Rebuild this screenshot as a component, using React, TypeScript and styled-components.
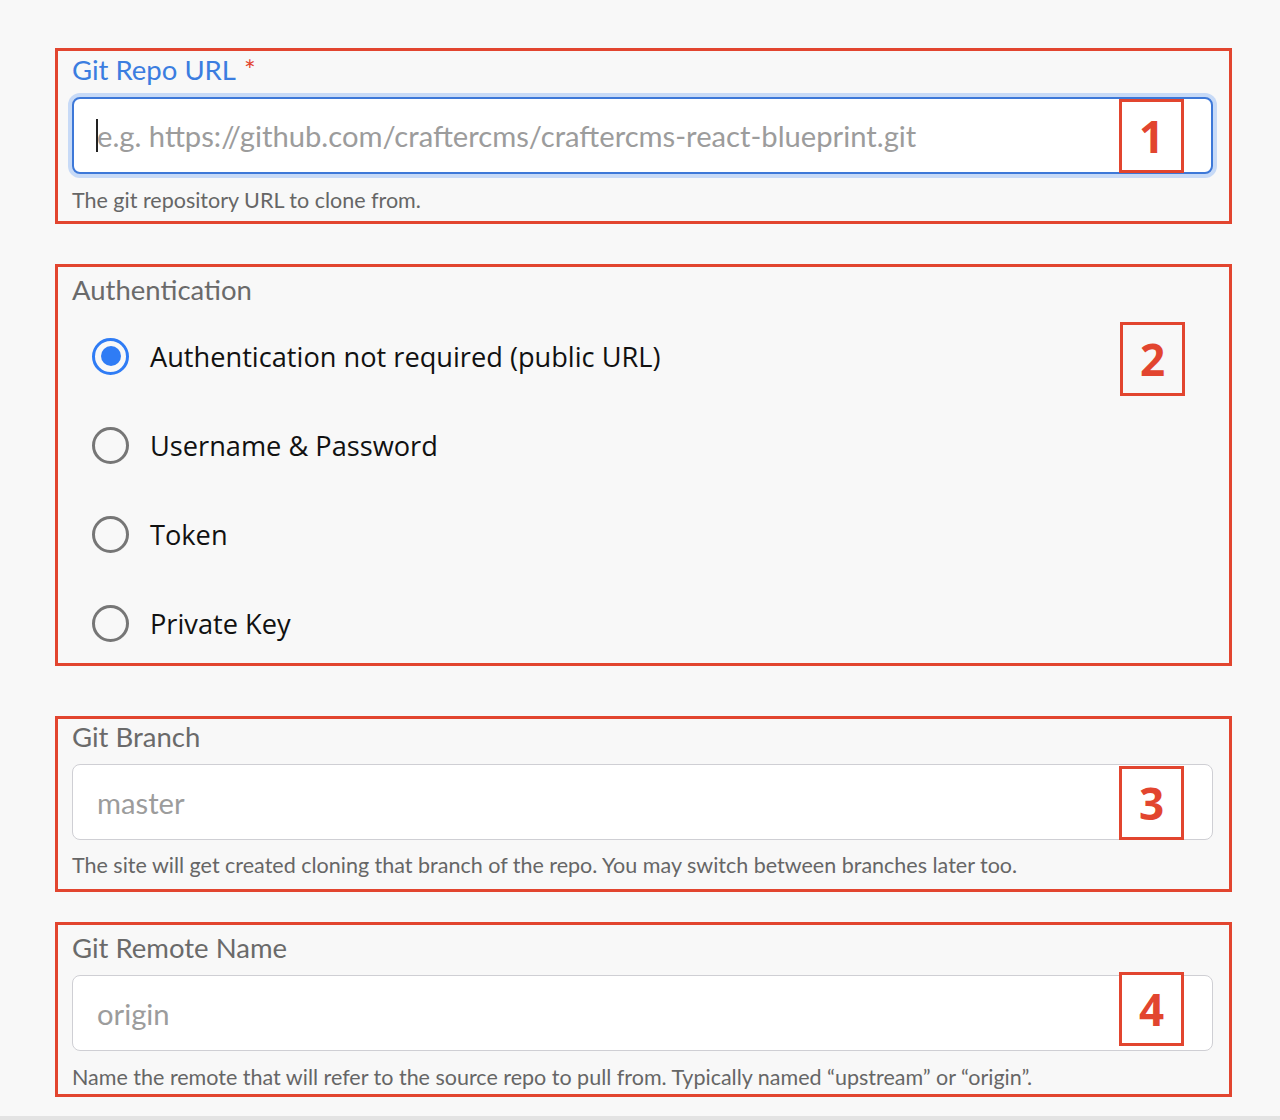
import React from "react";
import styled, { createGlobalStyle } from "styled-components";

const Global = createGlobalStyle`
  html, body { margin: 0; padding: 0; background: #f8f8f8; }
  * { box-sizing: border-box; }
`;

const RED = "#e2452f";

const Page = styled.div`
  width: 1280px;
  height: 1120px;
  display: flex;
  flex-direction: column;
  background: #f8f8f8;
  font-family: Lato, "Open Sans", sans-serif;
`;

const Main = styled.div`
  flex: 1;
  display: flex;
  flex-direction: column;
  padding: 48px 0 0 55px;
`;

const BottomStrip = styled.div`
  height: 4px;
  background: #e3e3e3;
`;

const Section = styled.section<{ $pad: string; $mt: number }>`
  position: relative;
  width: 1177px;
  margin-top: ${(p) => p.$mt}px;
  border: 3px solid ${RED};
  padding: ${(p) => p.$pad};
  display: flex;
  flex-direction: column;
`;

const Label = styled.div<{ $active?: boolean }>`
  font-size: 27.5px;
  line-height: 36px;
  color: ${(p) => (p.$active ? "#3b7de0" : "#6a6a6a")};
`;

const Star = styled.span`
  color: ${RED};
  margin-left: 8px;
`;

const InputWrap = styled.div`
  position: relative;
  margin-top: 9px;
  width: 1141px;
`;

const Input = styled.input<{ $focused?: boolean; $h: number }>`
  display: block;
  width: 100%;
  height: ${(p) => p.$h}px;
  border-radius: 8px;
  background: #fff;
  border: ${(p) => (p.$focused ? "2px solid #3d78d8" : "1px solid #cfcfd4")};
  box-shadow: ${(p) => (p.$focused ? "0 0 0 4px #c7daf7" : "none")};
  padding: 0 ${(p) => (p.$focused ? 23 : 24)}px;
  font-family: Lato, "Open Sans", sans-serif;
  font-size: 29.2px;
  color: #333;
  outline: none;
  &::placeholder {
    color: #9c9c9c;
  }
`;

const Caret = styled.span`
  position: absolute;
  left: 24px;
  top: 22px;
  width: 2px;
  height: 33px;
  background: #222;
`;

const Helper = styled.div<{ $mt: number }>`
  margin-top: ${(p) => p.$mt}px;
  font-size: 21.5px;
  line-height: 24px;
  color: #666;
`;

const Badge = styled.div<{ $top: number; $right: number }>`
  position: absolute;
  top: ${(p) => p.$top}px;
  right: ${(p) => p.$right}px;
  width: 65px;
  height: 74px;
  border: 3px solid ${RED};
  background: #fff;
  display: flex;
  align-items: center;
  justify-content: center;
  font-family: "Open Sans", sans-serif;
  font-weight: 700;
  font-size: 44px;
  color: ${RED};
`;

const ClearBadge = styled(Badge)`
  background: transparent;
`;

const RadioList = styled.div`
  display: flex;
  flex-direction: column;
  gap: 41px;
  margin-top: 24px;
  padding-left: 20px;
`;

const RadioRow = styled.label`
  display: flex;
  align-items: center;
  height: 48px;
  gap: 21px;
  font-family: "Open Sans", sans-serif;
  font-size: 27.2px;
  color: #111;
`;

const Circle = styled.span<{ $checked?: boolean }>`
  width: 37px;
  height: 37px;
  border-radius: 50%;
  border: 3px solid ${(p) => (p.$checked ? "#2f7cf5" : "#767676")};
  display: flex;
  align-items: center;
  justify-content: center;
  flex: none;
  &::after {
    content: "";
    display: ${(p) => (p.$checked ? "block" : "none")};
    width: 20px;
    height: 20px;
    border-radius: 50%;
    background: #2f7cf5;
  }
`;

const options = [
  "Authentication not required (public URL)",
  "Username & Password",
  "Token",
  "Private Key",
];

export default function App() {
  return (
    <Page>
      <Global />
      <Main>
        <Section $pad="1px 14px 9px 14px" $mt={0}>
          <Label $active>
            Git Repo URL<Star>*</Star>
          </Label>
          <InputWrap>
            <Input
              $focused
              $h={77}
              placeholder="e.g. https://github.com/craftercms/craftercms-react-blueprint.git"
            />
            <Caret />
            <Badge $top={2} $right={29}>1</Badge>
          </InputWrap>
          <Helper $mt={14}>The git repository URL to clone from.</Helper>
        </Section>

        <Section $pad="5px 14px 16px 14px" $mt={40}>
          <Label>Authentication</Label>
          <RadioList>
            {options.map((o, i) => (
              <RadioRow key={o}>
                <Circle $checked={i === 0} />
                {o}
              </RadioRow>
            ))}
          </RadioList>
          <ClearBadge $top={55} $right={44}>2</ClearBadge>
        </Section>

        <Section $pad="0 14px 12px 14px" $mt={50}>
          <Label>Git Branch</Label>
          <InputWrap>
            <Input $h={76} placeholder="master" />
            <Badge $top={2} $right={29}>3</Badge>
          </InputWrap>
          <Helper $mt={13}>
            The site will get created cloning that branch of the repo. You may switch between branches later too.
          </Helper>
        </Section>

        <Section $pad="5px 14px 5px 14px" $mt={30}>
          <Label>Git Remote Name</Label>
          <InputWrap>
            <Input $h={76} placeholder="origin" />
            <Badge $top={-3} $right={29}>4</Badge>
          </InputWrap>
          <Helper $mt={14}>
            Name the remote that will refer to the source repo to pull from. Typically named “upstream” or “origin”.
          </Helper>
        </Section>
      </Main>
      <BottomStrip />
    </Page>
  );
}
